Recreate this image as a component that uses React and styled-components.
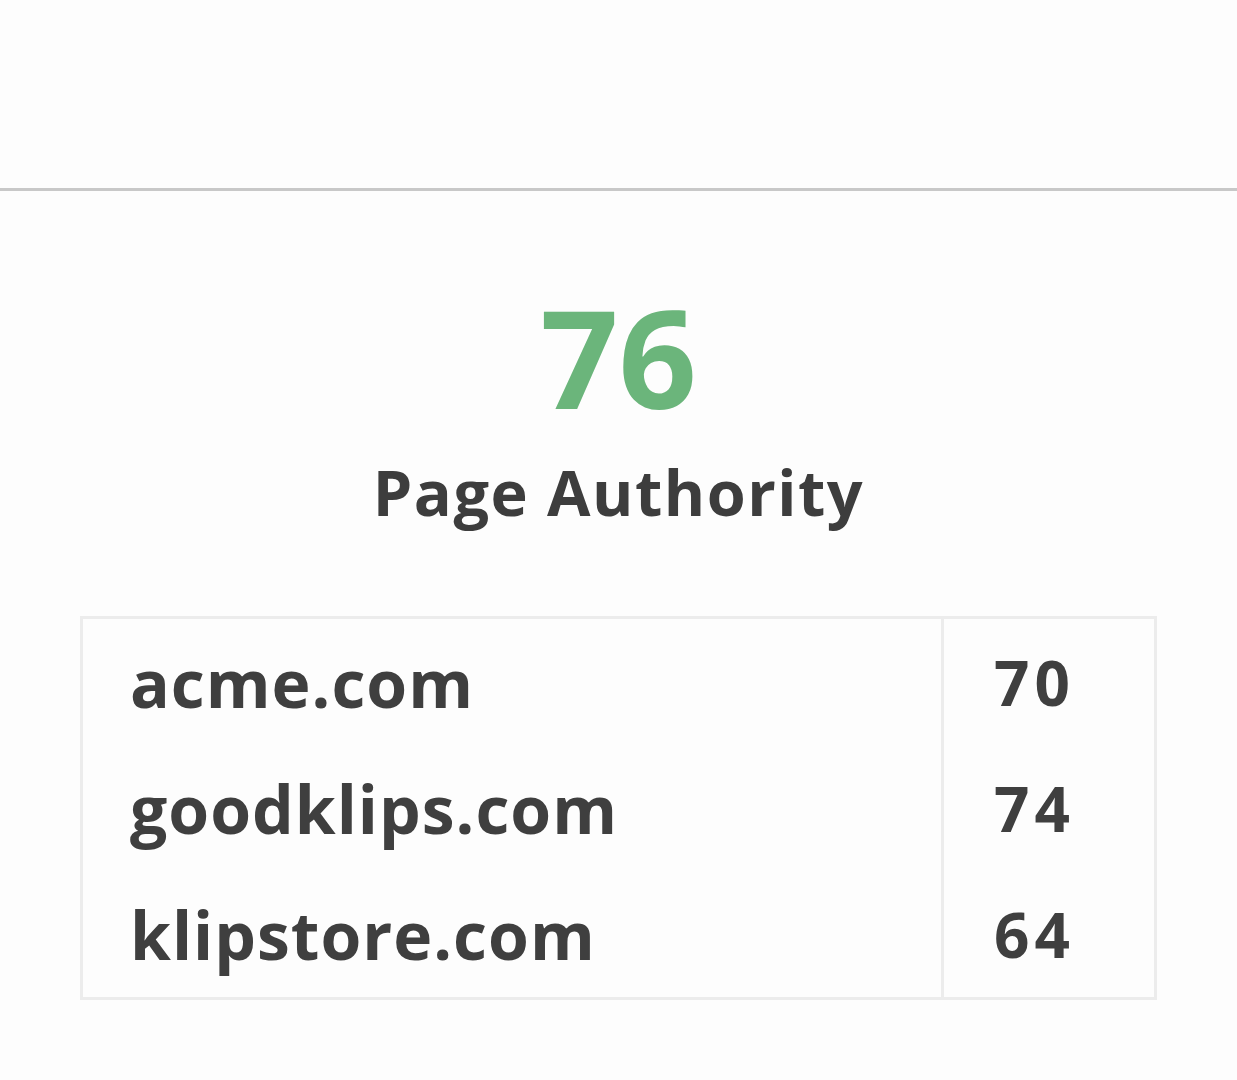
import React from "react"
import styled, { createGlobalStyle } from "styled-components"

const GlobalStyle = createGlobalStyle`
  html, body {
    margin: 0;
    padding: 0;
    background: #fdfdfd;
  }
  body {
    font-family: "Open Sans", "Noto Sans", sans-serif;
    color: #3b3b3b;
  }
`

const Page = styled.div`
  width: 1237px;
  min-height: 1080px;
  display: flex;
  flex-direction: column;
`

const Header = styled.div`
  height: 188px;
  border-bottom: 3px solid #c8c8c8;
`

const Metric = styled.div`
  display: flex;
  flex-direction: column;
  align-items: center;
  padding-top: 97px;
`

const Value = styled.div`
  font-size: 137px;
  line-height: 1;
  font-weight: 700;
  color: #6bb57b;
`

const Label = styled.div`
  margin-top: 35px;
  font-size: 63px;
  line-height: 1;
  font-weight: 700;
  letter-spacing: 1.5px;
  color: #3d3d3d;
`

const Table = styled.table`
  margin: 93px 80px 0;
  border-collapse: collapse;
  border: 3px solid #ececec;
`

const Cell = styled.td`
  height: 126px;
  padding: 0 0 0 ${p => (p.$num ? "50px" : "47px")};
  font-size: ${p => (p.$num ? "62px" : "66px")};
  font-weight: 700;
  color: #3f3f3f;
  letter-spacing: ${p => (p.$num ? "5px" : "1px")};
  width: ${p => (p.$num ? "160px" : "auto")};
  border-left: ${p => (p.$num ? "3px solid #ececec" : "none")};
  vertical-align: middle;
`

const rows = [
  { site: "acme.com", score: 70 },
  { site: "goodklips.com", score: 74 },
  { site: "klipstore.com", score: 64 },
]

export default function App() {
  return (
    <Page>
      <GlobalStyle />
      <Header />
      <Metric>
        <Value>76</Value>
        <Label>Page Authority</Label>
      </Metric>
      <Table>
        <tbody>
          {rows.map(r => (
            <tr key={r.site}>
              <Cell>{r.site}</Cell>
              <Cell $num>{r.score}</Cell>
            </tr>
          ))}
        </tbody>
      </Table>
    </Page>
  )
}
